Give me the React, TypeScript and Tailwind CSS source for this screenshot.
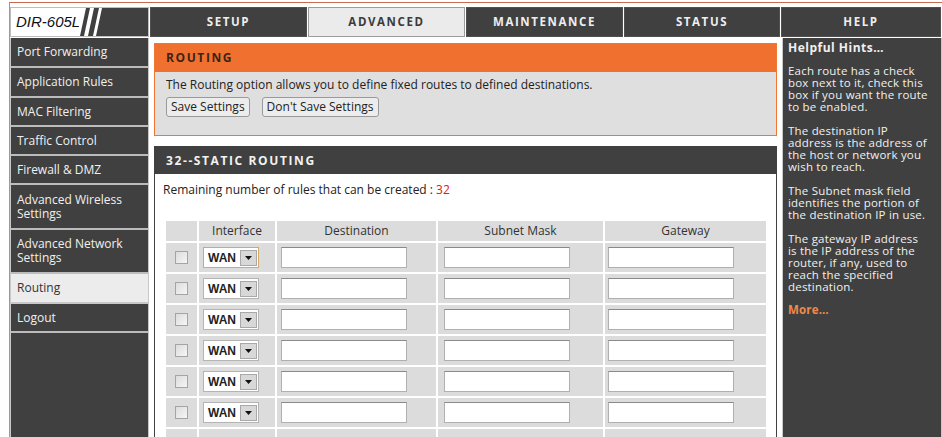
const tabs = [
  { label: 'SETUP', w: 'w-[157px]' },
  { label: 'ADVANCED', w: 'w-[157px]', active: true },
  { label: 'MAINTENANCE', w: 'w-[157px]' },
  { label: 'STATUS', w: 'w-[156px]' },
  { label: 'HELP', w: 'w-[160px]' },
]

const menu = [
  { label: ['Port Forwarding'], h: 'h-[30px]' },
  { label: ['Application Rules'], h: 'h-[30px]' },
  { label: ['MAC Filtering'], h: 'h-[29px]' },
  { label: ['Traffic Control'], h: 'h-[29px]' },
  { label: ['Firewall & DMZ'], h: 'h-[29px]' },
  { label: ['Advanced Wireless', 'Settings'], h: 'h-[45px]' },
  { label: ['Advanced Network', 'Settings'], h: 'h-[44px]' },
  { label: ['Routing'], h: 'h-[30px]', active: true },
  { label: ['Logout'], h: 'h-[29px]' },
]

const hints = [
  ['Each route has a check', 'box next to it, check this', 'box if you want the route', 'to be enabled.'],
  ['The destination IP', 'address is the address of', 'the host or network you', 'wish to reach.'],
  ['The Subnet mask field', 'identifies the portion of', 'the destination IP in use.'],
  ['The gateway IP address', 'is the IP address of the', 'router, if any, used to', 'reach the specified', 'destination.'],
]

function WanSelect({ focused }: { focused?: boolean }) {
  return (
    <div
      className={`flex items-center justify-between w-[56px] h-[21px] bg-white border pl-[4px] pr-[1px] ${
        focused ? 'border-[#d4a868]' : 'border-[#b4b4b4]'
      }`}
    >
      <span className="text-[12px] font-bold text-[#222] font-['Liberation_Sans',sans-serif]">WAN</span>
      <span className="flex items-center justify-center w-[17px] h-[16px] bg-[#d8d8d8] border border-[#a8a8a8]">
        <svg width="7" height="4" viewBox="0 0 7 4">
          <path d="M0 0h7L3.5 4z" fill="#111" />
        </svg>
      </span>
    </div>
  )
}

function TextBox() {
  return <div className="w-[126px] h-[21px] bg-white border border-[#b0b0b0] border-t-[#8a8a8a]" />
}

export default function App() {
  return (
    <div className="w-[942px] h-[437px] overflow-hidden bg-white font-['Open_Sans',sans-serif] text-[12px]">
      <div className="ml-[9px] mt-[2px] h-[440px] border-l border-t border-l-[#9a9a9a] border-t-[#c86a50] pt-[4px] flex flex-col">
        {/* Top nav */}
        <div className="flex gap-[1px] h-[30px] bg-white">
          <div className="w-[139px] flex bg-[#404040] border border-[#bdbdbd] overflow-hidden">
            <div className="w-[68px] shrink-0 bg-white flex items-center pl-[5px]">
              <span className="italic whitespace-nowrap text-[15px] text-[#111] font-['Liberation_Sans',sans-serif]">
                DIR-605L
              </span>
            </div>
            <svg width="30" height="28" viewBox="0 0 30 28" className="shrink-0">
              <path d="M0 0h7L1 28H0z" fill="#fff" />
              <path d="M11 0h4L9 28H5z" fill="#fff" />
              <path d="M20 0h3L17 28h-3z" fill="#fff" />
            </svg>
          </div>
          {tabs.map((t) => (
            <div
              key={t.label}
              className={`${t.w} flex items-center justify-center font-bold tracking-[1.6px] text-[11.5px] border ${
                t.active ? 'bg-[#ebebeb] text-[#3c3c3c] border-[#9c9c9c]' : 'bg-[#404040] text-[#eeeeee] border-[#505050]'
              }`}
            >
              {t.label}
            </div>
          ))}
        </div>

        <div className="flex flex-1 mt-[1px]">
          {/* Sidebar */}
          <div className="w-[139px] bg-[#404040] border-x border-[#c8c8c8] flex flex-col">
            {menu.map((m) => (
              <div
                key={m.label[0]}
                className={`${m.h} flex flex-col justify-center px-[6px] leading-[14px] border-b-2 whitespace-nowrap ${
                  m.active ? 'bg-[#ececec] text-[#333] border-[#c8c8c8]' : 'text-[#f0f0f0] border-[#bcbcbc]'
                }`}
              >
                {m.label.map((l) => (
                  <span key={l}>{l}</span>
                ))}
              </div>
            ))}
          </div>

          {/* Main */}
          <div className="w-[631px] ml-[1px] bg-white px-[4px] pt-[5px]">
            <div className="border border-[#f07632]">
              <div className="h-[28px] bg-[#f07030] flex items-center px-[11px] font-bold tracking-[1.6px] text-[#3a2518] text-[12px]">
                ROUTING
              </div>
              <div className="bg-[#dfdfdf] px-[11px] pt-[6px] pb-[18px] text-[#222] leading-[14px]">
                <p>The Routing option allows you to define fixed routes to defined destinations.</p>
                <div className="flex gap-[12px] mt-[5px]">
                  <button className="h-[20px] px-[4px] bg-[#ececec] border border-[#9a9a9a] rounded-[3px] text-[12px] leading-[14px] text-[#222]">
                    Save Settings
                  </button>
                  <button className="h-[20px] px-[4px] bg-[#ececec] border border-[#9a9a9a] rounded-[3px] text-[12px] leading-[14px] text-[#222]">
                    Don't Save Settings
                  </button>
                </div>
              </div>
            </div>

            <div className="mt-[10px] border border-[#404040] h-[300px]">
              <div className="h-[27px] bg-[#404040] flex items-center px-[11px] font-bold tracking-[1.6px] text-[#f2f2f2] text-[12px]">
                32--STATIC ROUTING
              </div>
              <p className="px-[8px] pt-[8px] leading-[16px] text-[#222]">
                Remaining number of rules that can be created : <span className="text-[#d42020]">32</span>
              </p>
              <table className="ml-[9px] mt-[21px] border-separate border-spacing-[2px] text-[#333] leading-[14px]">
                <thead>
                  <tr className="h-[20px] bg-[#dcdcdc]">
                    <th className="w-[31px] font-normal" />
                    <th className="w-[76px] font-normal">Interface</th>
                    <th className="w-[159px] font-normal">Destination</th>
                    <th className="w-[165px] font-normal">Subnet Mask</th>
                    <th className="w-[161px] font-normal">Gateway</th>
                  </tr>
                </thead>
                <tbody>
                  {Array.from({ length: 6 }).map((_, i) => (
                    <tr key={i} className="h-[29px] bg-[#dcdcdc]">
                      <td className="pl-[9px]">
                        <div className="w-[13px] h-[13px] border border-[#a4a4a4] bg-gradient-to-br from-[#dcdcdc] to-[#f6f6f6]" />
                      </td>
                      <td className="pl-[4px]">
                        <WanSelect focused={i === 0} />
                      </td>
                      <td className="pl-[4px]">
                        <TextBox />
                      </td>
                      <td className="pl-[6px]">
                        <TextBox />
                      </td>
                      <td className="pl-[3px]">
                        <TextBox />
                      </td>
                    </tr>
                  ))}
                  <tr className="h-[29px] bg-[#dcdcdc]">
                    <td />
                    <td />
                    <td />
                    <td />
                    <td />
                  </tr>
                </tbody>
              </table>
            </div>
          </div>

          {/* Help */}
          <div className="w-[160px] ml-[1px] bg-[#404040] border-x border-[#c8c8c8] px-[5px] pt-[3px] text-[#f0f0f0] text-[11.5px] tracking-[0.2px] leading-[12px] whitespace-nowrap">
            <p className="font-bold text-[12px] tracking-[0.5px] leading-[14px]">Helpful Hints…</p>
            {hints.map((h, i) => (
              <p key={i} className={i === 0 ? 'mt-[10px]' : 'mt-[12px]'}>
                {h.map((l) => (
                  <span key={l} className="block">
                    {l}
                  </span>
                ))}
              </p>
            ))}
            <p className="mt-[11px] font-bold text-[#f08a4a]">More…</p>
          </div>
        </div>
      </div>
    </div>
  )
}
